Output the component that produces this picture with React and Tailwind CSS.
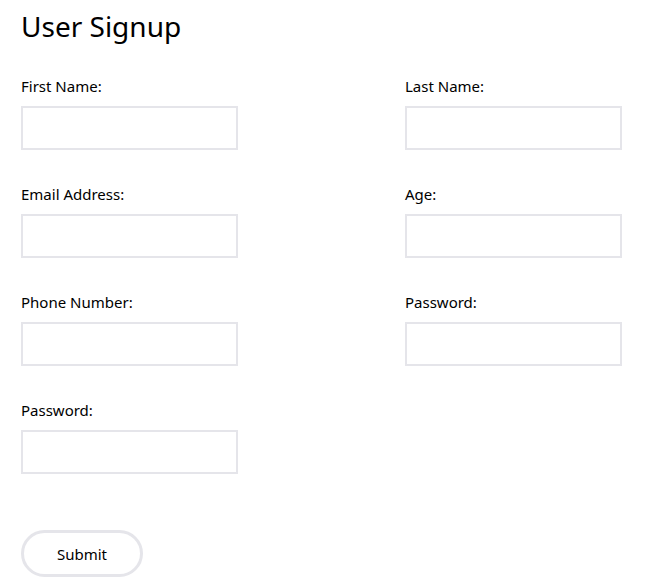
const fields = [
  'First Name:',
  'Last Name:',
  'Email Address:',
  'Age:',
  'Phone Number:',
  'Password:',
  'Password:',
];

export default function App() {
  return (
    <div className="min-h-screen bg-white text-black px-[21px] pt-[8px]" style={{ fontFamily: '"Noto Sans", sans-serif' }}>
      <h1 className="text-[28px] leading-[36px] font-normal">User Signup</h1>

      <div className="grid grid-cols-[384px_217px] gap-y-[35px] mt-[33px]">
        {fields.map((label, i) => (
          <div key={i} className="flex flex-col">
            <label className="text-[15px] leading-[18px] mb-[11px]">{label}</label>
            <input className="h-[44px] w-[217px] border-2 border-[#e5e5ea] outline-none px-2" />
          </div>
        ))}
      </div>

      <button className="mt-[56px] h-[47px] w-[122px] rounded-full border-[3px] border-[#e5e5ea] bg-white text-[15px] leading-[20px] pt-[1px]">
        Submit
      </button>
    </div>
  );
}
